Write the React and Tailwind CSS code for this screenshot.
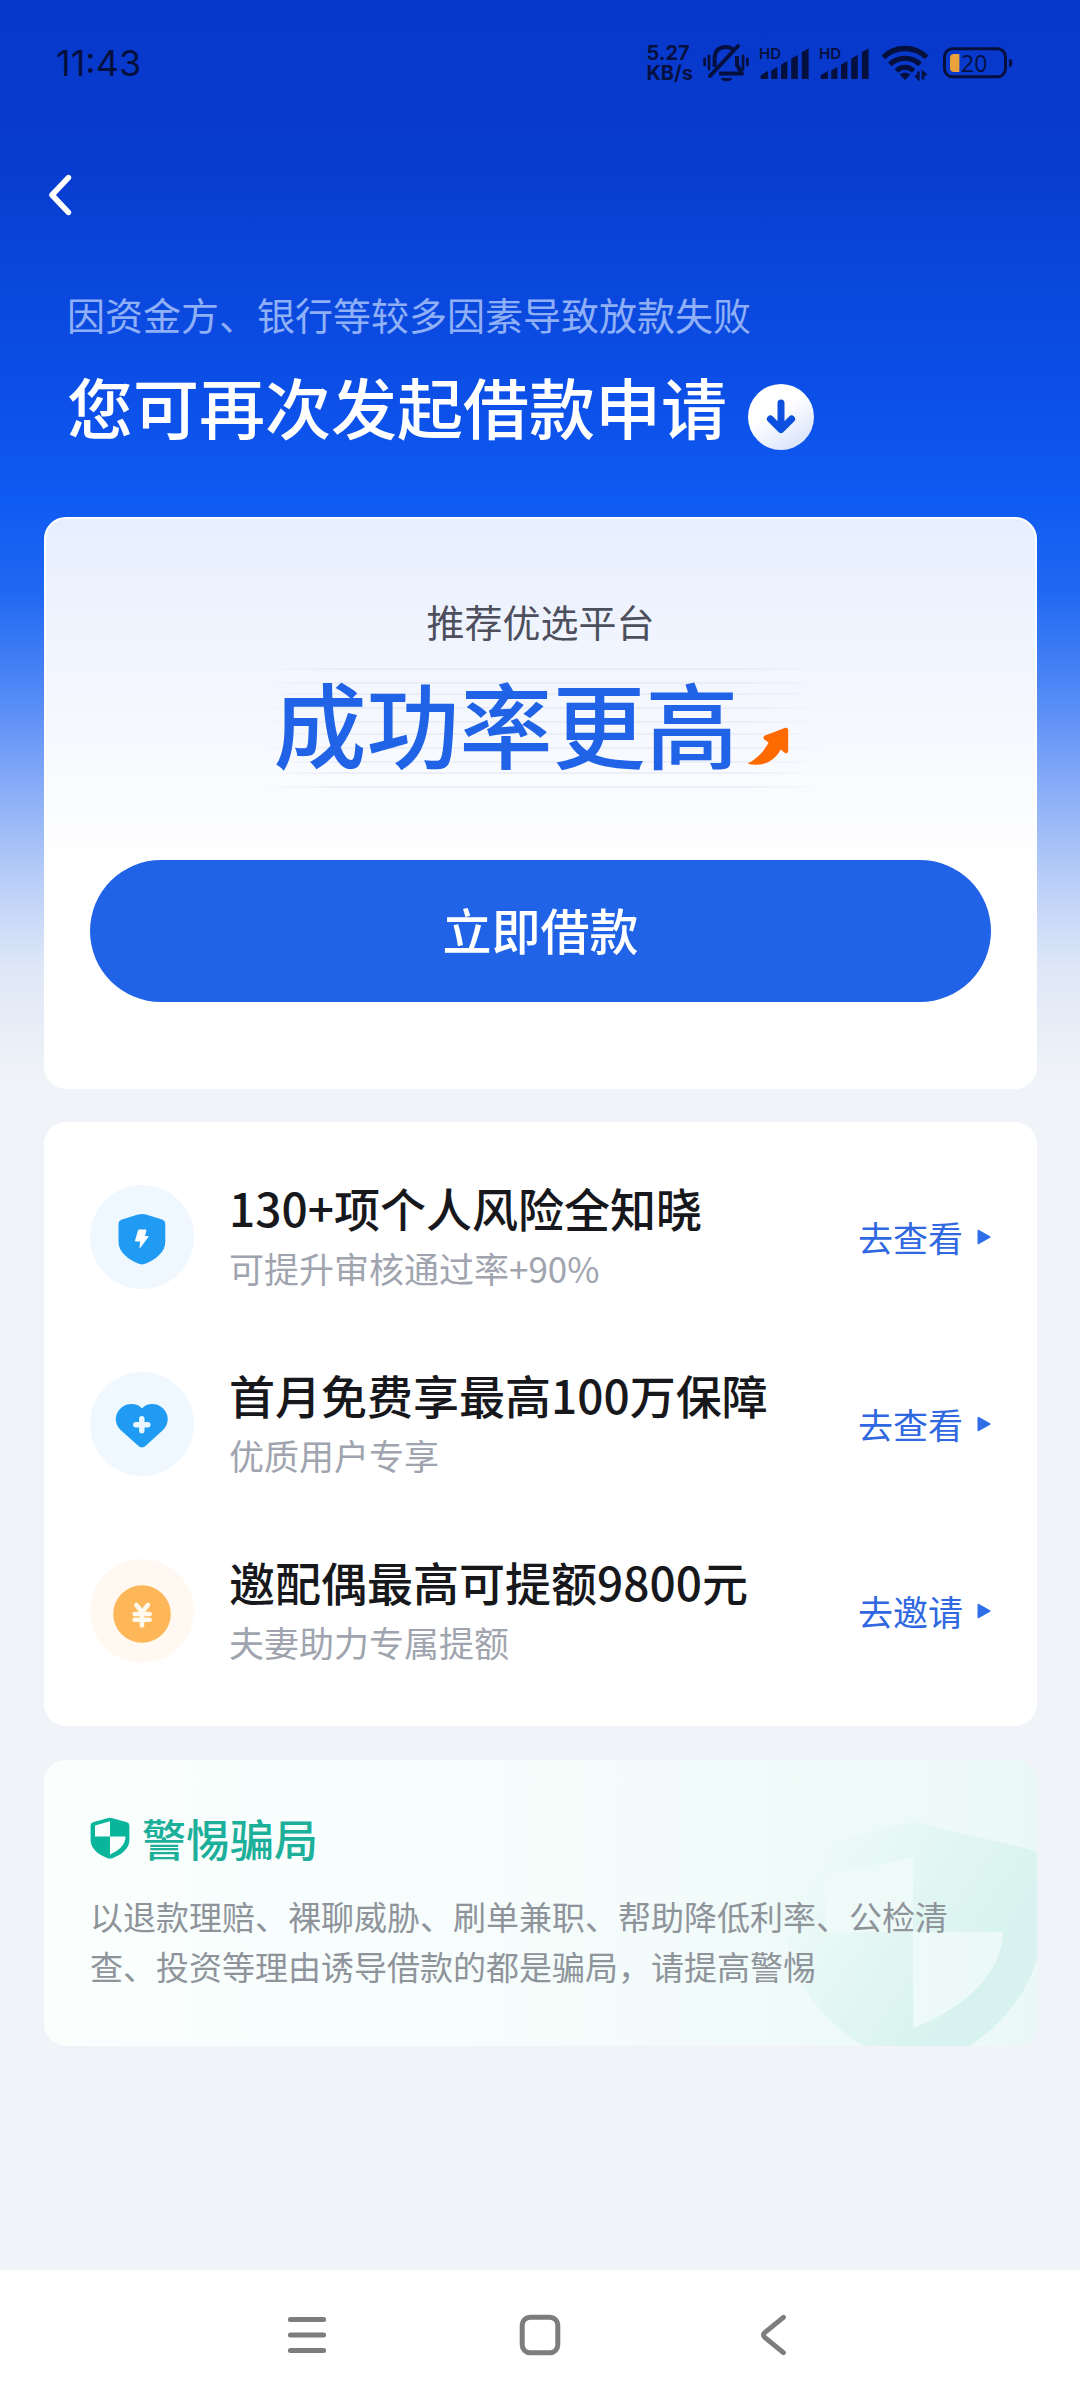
// src/App.jsx

import React from 'react';

const BoltShieldIcon = () => (
  <svg viewBox="0 0 104 104" className="h-[104px] w-[104px] shrink-0" aria-hidden="true">
    <circle cx="52" cy="52" r="52" fill="#f0f8ff" />
    <path
      d="M48 29.6Q52 28.2 56 29.6L72 34.4Q75.3 35.6 75.3 39V57C75.3 67 66 74 56 78.6Q52 80.2 48 78.6C38 74 28.5 67 28.5 57V39Q28.5 35.6 32 34.4Z"
      fill="#1f9bf3"
    />
    <path
      d="M48.6 45H56L54.4 51.6H58.2L50 62.6L50.6 56H45.4Z"
      fill="#fff"
      stroke="#fff"
      strokeWidth="1"
      strokeLinejoin="round"
    />
  </svg>
);

const HeartIcon = () => (
  <svg viewBox="0 0 104 104" className="h-[104px] w-[104px] shrink-0" aria-hidden="true">
    <circle cx="52" cy="52" r="52" fill="#f0f8ff" />
    <path
      d="M52 36.4C56.5 31 66 30.4 72 35.4C79.5 41.6 79.5 51.6 73 58L56 73.4Q52 77.4 48 73.4L30.6 58C24 51.6 24 41.6 31.6 35.4C37.6 30.4 47.5 31 52 36.4Z"
      fill="#1f9bf3"
    />
    <path d="M51.8 46.6V58.8M45.8 52.8H57.8" stroke="#eaf6ff" strokeWidth="5.4" strokeLinecap="round" />
  </svg>
);

const CoinIcon = () => (
  <svg viewBox="0 0 104 104" className="h-[104px] w-[104px] shrink-0" aria-hidden="true">
    <circle cx="52" cy="52" r="52" fill="#fff9f2" />
    <circle cx="52" cy="55" r="28.8" fill="#fdb759" />
    <path
      d="M46.4 46L52 53L58 46M52 53V66.4M44.6 55H59.6M44.6 60.8H59.6"
      stroke="#fff8ec"
      strokeWidth="4.6"
      strokeLinecap="round"
      fill="none"
    />
  </svg>
);

const features = [
  {
    Icon: BoltShieldIcon,
    title: '130+项个人风险全知晓',
    desc: '可提升审核通过率+90%',
    action: '去查看',
  },
  {
    Icon: HeartIcon,
    title: '首月免费享最高100万保障',
    desc: '优质用户专享',
    action: '去查看',
  },
  {
    Icon: CoinIcon,
    title: '邀配偶最高可提额9800元',
    desc: '夫妻助力专属提额',
    action: '去邀请',
  },
];

const Signal = () => (
  <div className="relative">
    <span className="absolute left-0 top-0 text-[15px] font-semibold leading-[16px]">HD</span>
    <svg viewBox="0 0 50 34" className="h-[34px] w-[50px]" fill="#06103f" aria-hidden="true">
      <path d="M2 32.5V29.6L8.6 25.6V32.5Z" stroke="#06103f" strokeWidth="1" strokeLinejoin="round" />
      <path d="M12.2 33V24.4L18.4 21V33Z" />
      <path d="M22 33V18.4L28.4 15V33Z" />
      <path d="M32.2 33V12.4L38.8 9V33Z" />
      <path d="M42.8 33V6L49.6 2.4V33Z" />
    </svg>
  </div>
);

const StatusBar = () => (
  <div className="flex h-[126px] items-center justify-between pl-[56px] pr-[67px] font-[Inter,sans-serif] text-[#06103f]">
    <span className="text-[36px]">11:43</span>
    <div className="flex items-center gap-[10px]">
      <div className="text-[20px] font-bold leading-[20px]">
        <div>5.27</div>
        <div>KB/s</div>
      </div>
      <svg viewBox="0 0 46 40" className="h-[40px] w-[46px]" fill="none" stroke="#06103f" aria-hidden="true">
        <path d="M35 3L7 33" strokeWidth="4" strokeLinecap="round" />
        <path d="M11.6 24V16C11.6 8 16 4 22.6 4C26 4 28.4 5 30 6.6" strokeWidth="4" />
        <path d="M34 13V22L39 30.6H16" strokeWidth="4" strokeLinejoin="round" />
        <path d="M18 35.6H29Q27 38 23.5 38Q20 38 18 35.6Z" fill="#06103f" strokeWidth="1" />
        <path d="M1.6 16V22M6 13V26M40 13V26M44.4 16V22" strokeWidth="2.8" strokeLinecap="round" />
      </svg>
      <Signal />
      <Signal />
      <svg viewBox="0 0 48 36" className="ml-[2px] h-[36px] w-[48px]" fill="none" stroke="#06103f" aria-hidden="true">
        <path d="M2.4 12.4C14 0.6 34 0.6 45.6 12.4" strokeWidth="5.4" />
        <path d="M9 19.4C17 11.4 31 11.4 39 19.4" strokeWidth="5.4" />
        <path d="M15.4 26C20.4 21 27.6 21 32.6 26" strokeWidth="5" />
        <path d="M18.6 29.6C21.4 27 26.6 27 29.4 29.6L24 35Z" fill="#06103f" stroke="none" />
        <path d="M37.4 26.4V33.4L34.4 30.4M42 34.4V27.4L45.4 30.4" strokeWidth="2.6" />
      </svg>
      <div className="relative ml-[4px]">
        <svg viewBox="0 0 70 32" className="h-[32px] w-[70px]" aria-hidden="true">
          <rect x="1.5" y="1.8" width="61" height="28" rx="8" fill="none" stroke="#06103f" strokeWidth="3" />
          <path d="M66 12Q69.4 12 69.4 16Q69.4 20 66 20Z" fill="#06103f" />
          <path d="M16.4 7H11Q7 7 7 11V21Q7 25 11 25H16.4Z" fill="#eba23c" />
        </svg>
        <span className="absolute left-[18px] top-0 font-['Open_Sans',sans-serif] text-[23px] leading-[32px]">20</span>
      </div>
    </div>
  </div>
);

const FeatureRow = ({ Icon, title, desc, action }) => (
  <li className="flex items-center gap-[35px]">
    <Icon />
    <div className="min-w-0 flex-1">
      <h3 className="text-[46px] font-medium leading-[54px] text-[#17181c]">{title}</h3>
      <p className="mt-[10px] pb-[2px] text-[35px] leading-[48px] text-[#9fa4af]">{desc}</p>
    </div>
    <a href="#" className="flex shrink-0 items-center gap-[14px] text-[35px] leading-[50px] text-[#2f68e0]">
      {action}
      <svg viewBox="0 0 14 16" className="h-[16px] w-[14px]" aria-hidden="true">
        <path d="M1.5 1.8V14.2L12.6 8Z" fill="#2f6ee8" stroke="#2f6ee8" strokeWidth="2" strokeLinejoin="round" />
      </svg>
    </a>
  </li>
);

const App = () => {
  return (
    <div className="flex min-h-screen flex-col bg-[#f0f3f8] bg-[linear-gradient(180deg,#0838cb_0px,#083bcf_150px,#0a46da_270px,#0c50e8_400px,#0f5af2_500px,#2068f2_590px,#4a84f5_680px,#83a9f7_780px,#b9cef8_880px,#dfe8f7_970px,#f0f3f8_1080px)] font-['Noto_Sans_CJK_SC',sans-serif]">
      <StatusBar />

      <div className="flex h-[138px] items-center pl-[44px]">
        <button type="button" aria-label="返回" className="p-1">
          <svg viewBox="0 0 24 42" className="h-[42px] w-[24px]" fill="none" aria-hidden="true">
            <path d="M20.4 3.6L4 21L20.4 38.4" stroke="#fff" strokeWidth="5.6" strokeLinecap="round" strokeLinejoin="round" />
          </svg>
        </button>
      </div>

      <header className="mt-[23px] px-[67px]">
        <p className="text-[38px] leading-[54px] text-[#8fb0f7]">因资金方、银行等较多因素导致放款失败</p>
        <div className="mt-[25px] flex items-end gap-[21px]">
          <h1 className="pb-[6px] text-[66px] font-medium leading-[78px] text-white">您可再次发起借款申请</h1>
          <svg viewBox="0 0 66 66" className="h-[66px] w-[66px]" aria-hidden="true">
            <defs>
              <linearGradient id="disc" x1="0.2" y1="0" x2="0.8" y2="1">
                <stop offset="0.4" stopColor="#fff" />
                <stop offset="1" stopColor="#d6e1fb" />
              </linearGradient>
            </defs>
            <circle cx="33" cy="33" r="33" fill="url(#disc)" />
            <path
              d="M33 19V45M22.4 35L33 45.6L43.6 35"
              fill="none"
              stroke="#0d50df"
              strokeWidth="7"
              strokeLinecap="round"
              strokeLinejoin="round"
            />
          </svg>
        </div>
      </header>

      <main className="mt-[67px] pl-[44px] pr-[43px]">
        <section className="rounded-[22px] border-2 border-white bg-[linear-gradient(180deg,#e7effe_0%,#f4f7fe_32%,#ffffff_62%)] px-[44px] pb-[85px] pt-[75px]">
          <p className="text-center text-[38px] leading-[54px] text-[#4d4f5c]">推荐优选平台</p>
          <div className="relative mx-auto mt-[20px] flex h-[120px] max-w-[570px] items-center gap-[8px] pl-[18px]">
            <svg viewBox="0 0 570 120" preserveAspectRatio="none" className="absolute inset-0 h-full w-full" aria-hidden="true">
              <defs>
                <linearGradient id="fade">
                  <stop offset="0" stopColor="#d9dfee" stopOpacity="0" />
                  <stop offset="0.15" stopColor="#d9dfee" stopOpacity="0.4" />
                  <stop offset="0.85" stopColor="#d9dfee" stopOpacity="0.4" />
                  <stop offset="1" stopColor="#d9dfee" stopOpacity="0" />
                </linearGradient>
              </defs>
              {[0, 14, 25, 39, 53, 65, 79, 93, 104, 118].map((y) => (
                <rect key={y} x="0" y={y} width="570" height="2" fill="url(#fade)" />
              ))}
            </svg>
            <h2 className="relative pb-[12px] text-[93px] font-medium leading-[108px] text-[#2063e7]">成功率更高</h2>
            <svg viewBox="0 0 42 38" className="relative mt-[36px] h-[38px] w-[42px]" aria-hidden="true">
              <path
                d="M0.6 36.4C8 33 17 25 21.6 15.6L17.4 12.6Q15 10 18 8.4L38.4 0.8Q41 0.4 41.2 3V24Q40.6 27.4 38 26L33.6 22.4C29 32 19 38 10 37.8Q4 38 0.6 36.4Z"
                fill="#ff6a00"
              />
            </svg>
          </div>
          <button
            type="button"
            className="mt-[72px] h-[142px] w-full rounded-full bg-[#2063e7] pb-[4px] text-[49px] font-medium text-white"
          >
            立即借款
          </button>
        </section>

        <section className="mt-[33px] rounded-[22px] bg-white px-[46px] py-[58px]">
          <ul className="flex flex-col gap-[73px]">
            {features.map((item) => (
              <FeatureRow key={item.title} {...item} />
            ))}
          </ul>
        </section>

        <section className="relative mt-[34px] overflow-hidden rounded-[22px] bg-[linear-gradient(90deg,#fafffe_0%,#f6fdfc_45%,#ebf9f6_100%)] px-[46px] pb-[55px] pt-[50px]">
          <svg viewBox="0 0 260 230" className="absolute bottom-0 right-0 h-[230px] w-[260px]" aria-hidden="true">
            <defs>
              <linearGradient id="mark" x1="0" y1="0.1" x2="0.8" y2="0.6">
                <stop offset="0.1" stopColor="#d8f3ef" stopOpacity="0" />
                <stop offset="1" stopColor="#d8f3ef" />
              </linearGradient>
            </defs>
            <path
              fillRule="evenodd"
              fill="url(#mark)"
              d="M136 6L252 33Q264 36 264 48V110C264 165 230 205 190 232H90C50 209 8 165 8 105V42Q8 36 14 34ZM136 41L49 60V116H136V212C180 196 226 160 226 116H136Z"
            />
          </svg>
          <div className="relative">
            <div className="flex items-center gap-[12px]">
              <svg viewBox="0 0 40 42" className="h-[42px] w-[40px]" aria-hidden="true">
                <path
                  fillRule="evenodd"
                  fill="#09b69c"
                  d="M17.4 1.2Q20 0.2 22.6 1.2L37 5.2Q39.4 6 39.4 8.6V23C39.4 32 31 38 22.4 41.2Q20 42 17.6 41.2C9 38 0.6 32 0.6 23V8.6Q0.6 6 3 5.2ZM20 4.2L5 8.6V19.4H20V37.4C28 34 35.6 28 35.6 19.4H20Z"
                />
              </svg>
              <h2 className="text-[44px] font-medium leading-[56px] text-[#1caf99]">警惕骗局</h2>
            </div>
            <p className="mt-[25px] text-[33px] leading-[50px] text-[#8f949b]">
              以退款理赔、裸聊威胁、刷单兼职、帮助降低利率、公检清查、投资等理由诱导借款的都是骗局，请提高警惕
            </p>
          </div>
        </section>
      </main>

      <nav className="mt-auto bg-white">
        <div className="mx-auto grid h-[130px] max-w-[700px] grid-cols-3 place-items-center">
          <button type="button" aria-label="菜单">
            <svg viewBox="0 0 40 42" className="h-[42px] w-[40px]" stroke="#7d7d7d" strokeWidth="5" strokeLinecap="round" aria-hidden="true">
              <path d="M3.4 5.6H36.6M3.4 21H36.6M3.4 36.4H36.6" />
            </svg>
          </button>
          <button type="button" aria-label="主页">
            <svg viewBox="0 0 42 42" className="h-[42px] w-[42px]" fill="none" aria-hidden="true">
              <rect x="3.2" y="3.2" width="35.6" height="35.6" rx="8" stroke="#7d7d7d" strokeWidth="5" />
            </svg>
          </button>
          <button type="button" aria-label="返回上一页">
            <svg viewBox="0 0 28 42" className="h-[42px] w-[28px]" fill="none" aria-hidden="true">
              <path d="M24.4 3.4L6 18.4Q3 21 6 23.6L24.4 38.6" stroke="#7d7d7d" strokeWidth="5" strokeLinecap="round" strokeLinejoin="round" />
            </svg>
          </button>
        </div>
      </nav>
    </div>
  );
};

export default App;
